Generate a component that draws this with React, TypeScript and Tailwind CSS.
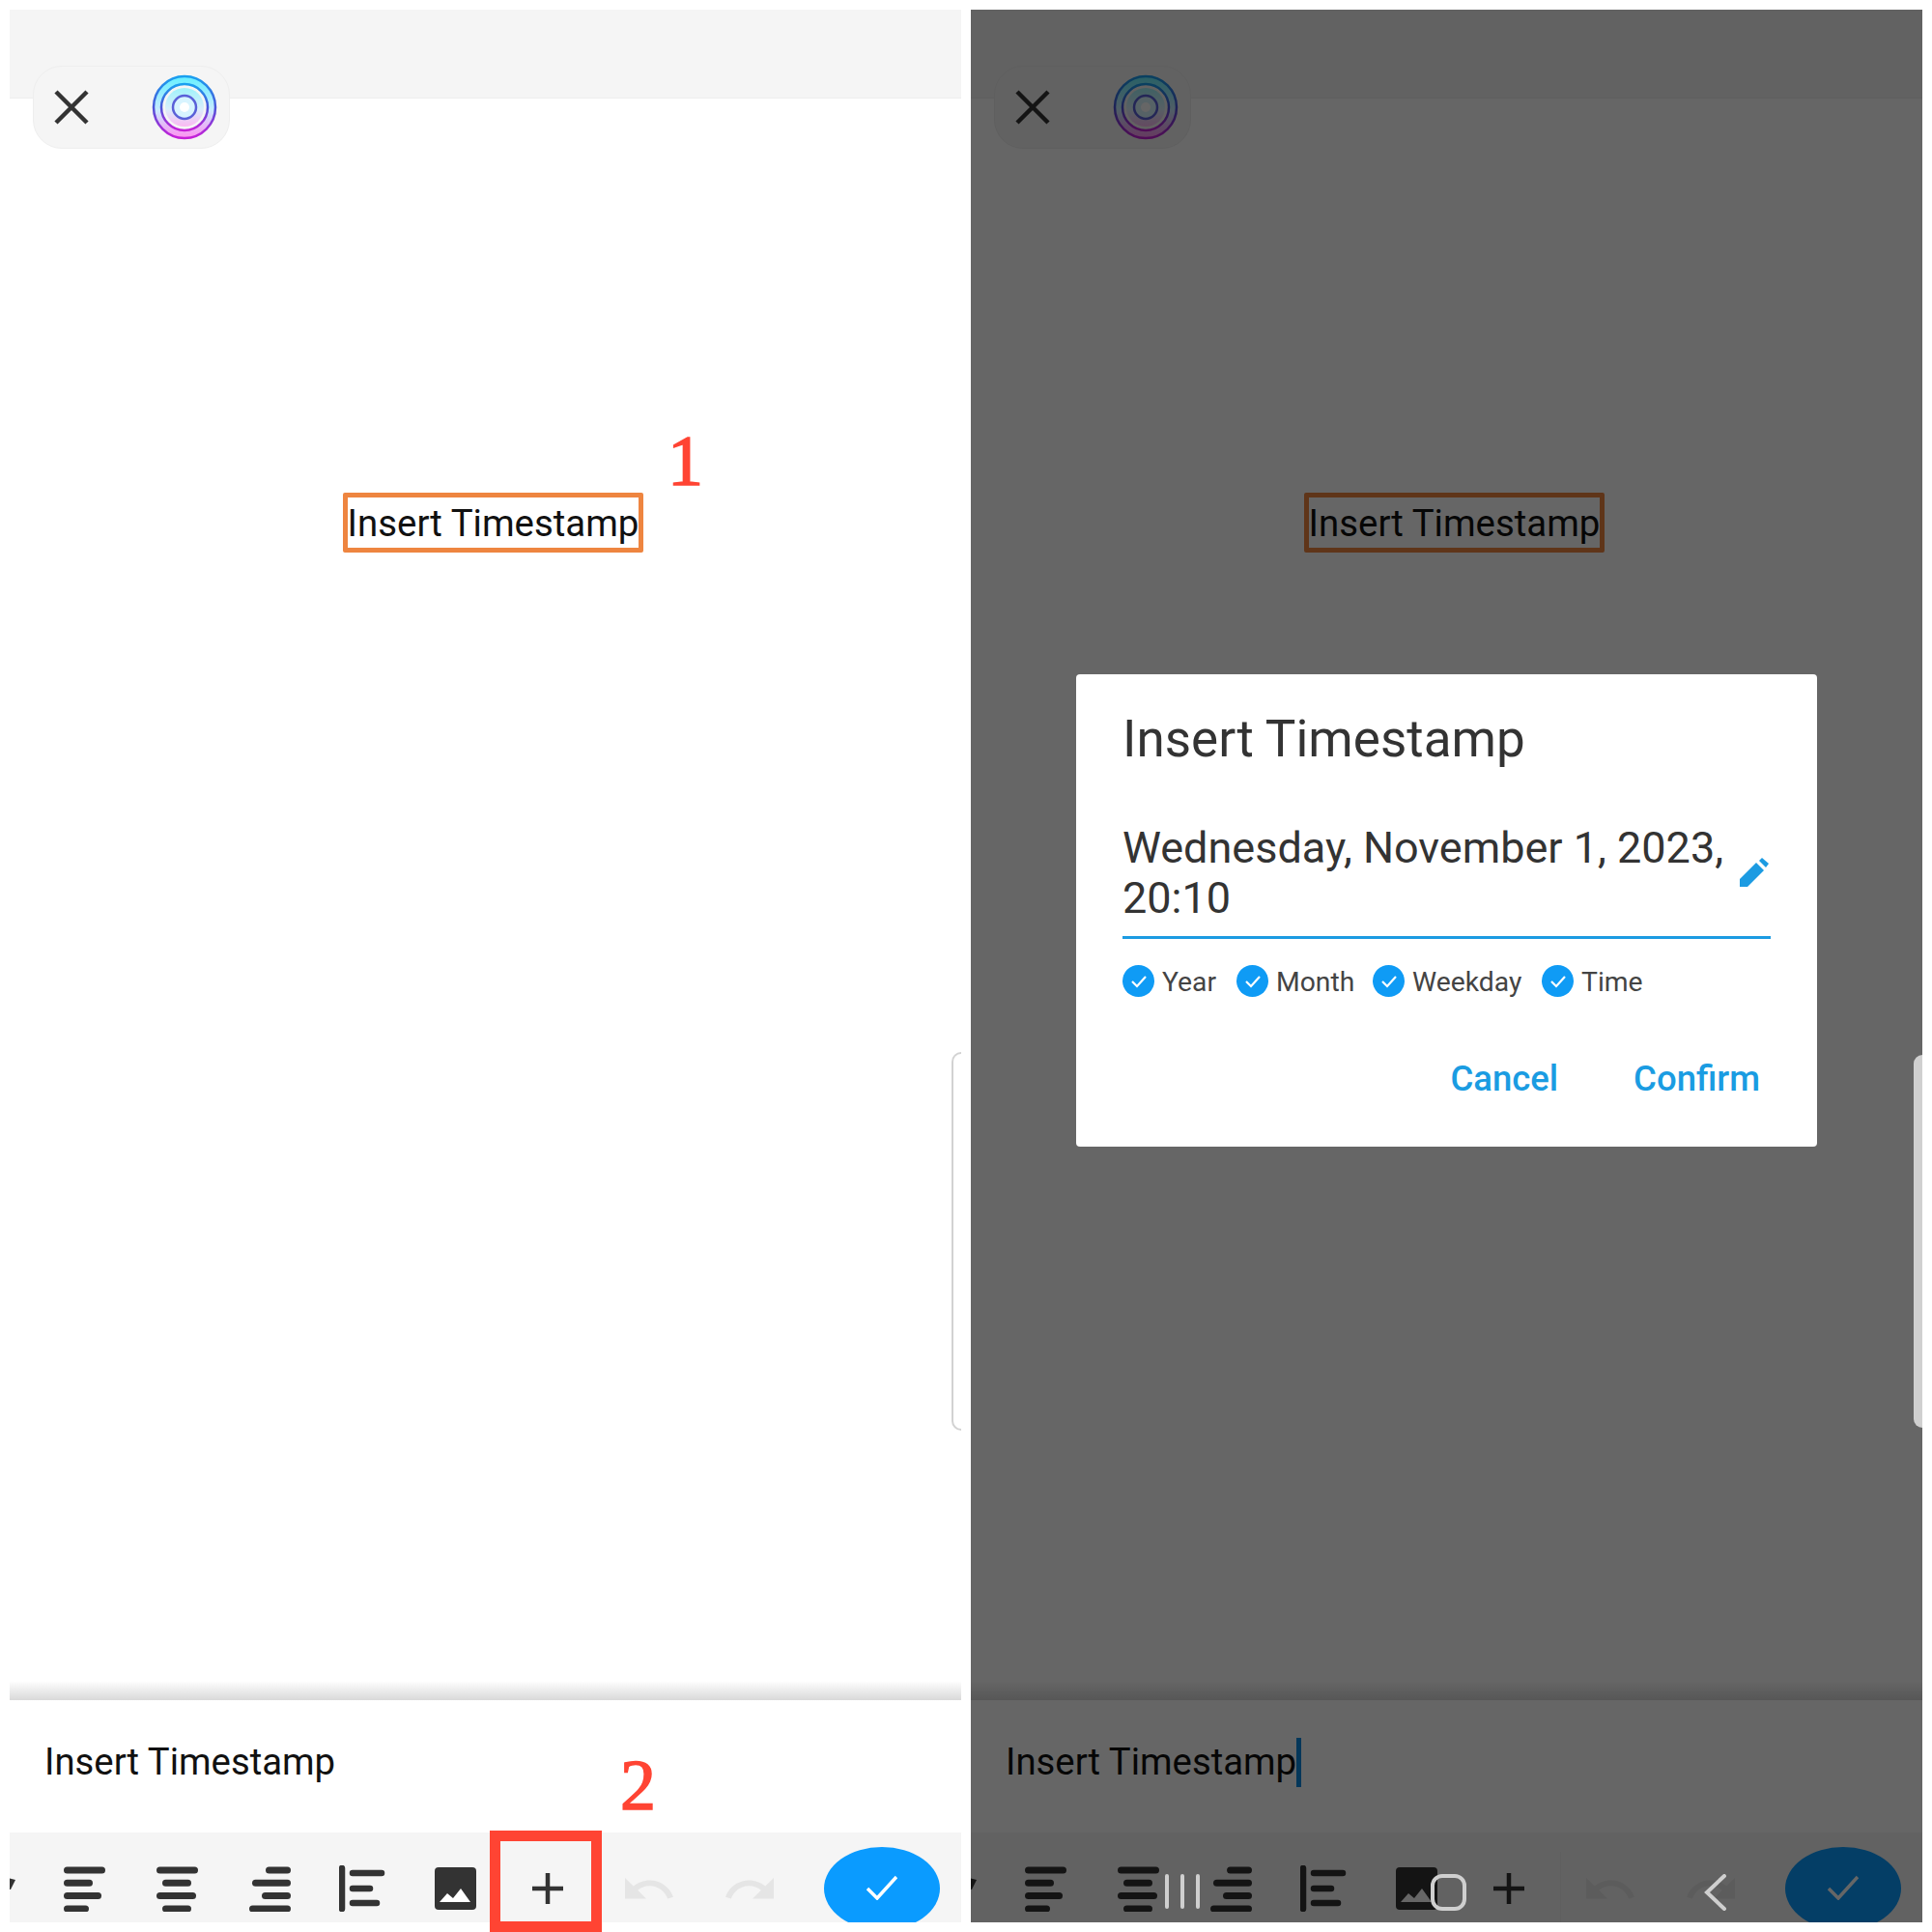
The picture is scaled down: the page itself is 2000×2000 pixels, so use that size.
import type { ReactNode } from "react";

function AlignIcon({ rows }: { rows: [number, number][] }) {
  return (
    <svg width="43" height="47" viewBox="0 0 43 47" fill="none" stroke="#333" strokeWidth="7" strokeLinecap="round">
      {rows.map(([from, to], i) => (
        <line key={i} x1={from + 3.5} x2={to - 3.5} y1={4 + i * 13.3} y2={4 + i * 13.3} />
      ))}
    </svg>
  );
}

function IndentIcon() {
  return (
    <svg width="48" height="48" viewBox="0 0 48 48" fill="none" stroke="#333" strokeLinecap="round">
      <line x1="3" x2="3" y1="3" y2="45" strokeWidth="6.5" />
      <line x1="14" x2="44" y1="8" y2="8" strokeWidth="6.5" />
      <line x1="14" x2="32" y1="24" y2="24" strokeWidth="6.5" />
      <line x1="14" x2="39" y1="39" y2="39" strokeWidth="6.5" />
    </svg>
  );
}

function ImageIcon() {
  return (
    <svg width="43" height="44" viewBox="0 0 43 44">
      <rect width="43" height="44" rx="4" fill="#333" />
      <path d="M5 36 L13 27 L19 32 L27 22 L37 36 Z" fill="#fff" />
    </svg>
  );
}

function UndoIcon() {
  return (
    <svg width="50" height="22" viewBox="2 7 20.5 9.2" preserveAspectRatio="none" fill="#e5e5e5">
      <path d="M12.5 8c-2.65 0-5.05.99-6.9 2.6L2 7v9h9l-3.62-3.62c1.39-1.16 3.16-1.88 5.12-1.88 3.54 0 6.55 2.31 7.6 5.5l2.37-.78C21.08 11.03 17.15 8 12.5 8z" />
    </svg>
  );
}

function RedoIcon() {
  return (
    <svg width="50" height="22" viewBox="1.5 7 20.5 9.2" preserveAspectRatio="none" fill="#e5e5e5">
      <path d="M18.4 10.6C16.55 8.99 14.15 8 11.5 8c-4.65 0-8.58 3.03-9.96 7.22L3.9 16c1.05-3.19 4.05-5.5 7.6-5.5 1.95 0 3.73.72 5.12 1.88L13 16h9V7l-3.6 3.6z" />
    </svg>
  );
}

function TargetLogo({ id }: { id: string }) {
  return (
    <svg width="68" height="68" viewBox="0 0 68 68" fill="none">
      <defs>
        <linearGradient id={`${id}-line`} x1="0" y1="0" x2="0" y2="1">
          <stop offset="0" stopColor="#1aa0f0" />
          <stop offset="0.5" stopColor="#4a55d8" />
          <stop offset="1" stopColor="#c81fd8" />
        </linearGradient>
        <linearGradient id={`${id}-fill`} x1="0" y1="0" x2="0" y2="1">
          <stop offset="0" stopColor="#66f0ff" />
          <stop offset="0.55" stopColor="#c8eaff" />
          <stop offset="1" stopColor="#ff90f0" />
        </linearGradient>
      </defs>
      <circle cx="34" cy="34" r="32" fill={`url(#${id}-fill)`} />
      <circle cx="34" cy="34" r="24" fill="#f5f5f5" />
      <circle cx="34" cy="34" r="20" fill={`url(#${id}-fill)`} opacity="0.6" />
      <circle cx="34" cy="34" r="12" fill="#d8f4ff" />
      <circle cx="34" cy="34" r="5" fill="#ffffff" />
      <circle cx="34" cy="34" r="32" stroke={`url(#${id}-line)`} strokeWidth="2.5" />
      <circle cx="34" cy="34" r="24" stroke={`url(#${id}-line)`} strokeWidth="2.5" />
      <circle cx="34" cy="34" r="12" stroke="#5a60d8" strokeWidth="2.5" />
    </svg>
  );
}

function Screen({ id, caret, children }: { id: string; caret?: boolean; children?: ReactNode }) {
  return (
    <div className="relative flex h-[1980px] w-[985px] flex-col overflow-hidden bg-white">
      <div className="h-[92px] border-b border-[#eeeeee] bg-[#f5f5f5]" />

      <div className="absolute left-[24px] top-[58px] flex h-[86px] w-[204px] items-center rounded-[30px] border border-[#eeeeee] bg-[#f5f5f5] pl-[21px]">
        <svg width="36" height="36" viewBox="0 0 36 36" fill="none" stroke="#333" strokeWidth="4.5">
          <path d="M2 2 L34 34 M34 2 L2 34" />
        </svg>
        <div className="ml-[65px]">
          <TargetLogo id={id} />
        </div>
      </div>

      <div className="flex-1 pl-[345px] pt-[408px]">
        <div className="flex h-[62px] w-[311px] items-center justify-center whitespace-nowrap rounded-[2px] border-[5px] border-[#ee8540] pt-[2px] text-[38.4px] leading-none text-[#111]">
          Insert Timestamp
        </div>
      </div>

      <div className="h-[20px] bg-gradient-to-b from-white to-[#d9d9d9]" />

      <div className="flex h-[137px] items-center pb-[8px] pl-[36px] text-[38.3px] leading-none text-[#111]">
        <span>Insert Timestamp</span>
        {caret ? <span className="h-[51px] w-[5px] bg-[#0a8ae0]" /> : null}
      </div>

      <div className="relative flex h-[93px] items-center bg-[#f5f5f5] pl-[29px] pt-[23px]">
        <svg className="absolute left-[-2px] top-[47px]" width="8" height="14" viewBox="0 0 8 14" fill="#333">
          <path d="M0 0 L8 2 L3 12 L0 12 Z" />
        </svg>
        <div className="flex w-[96px] justify-center">
          <AlignIcon rows={[[0, 43], [0, 30], [0, 39], [0, 26]]} />
        </div>
        <div className="flex w-[96px] justify-center">
          <AlignIcon rows={[[0, 43], [6, 36], [0, 41], [6, 36]]} />
        </div>
        <div className="flex w-[96px] justify-center">
          <AlignIcon rows={[[17, 43], [3, 43], [13, 43], [0, 43]]} />
        </div>
        <div className="flex w-[96px] justify-center">
          <IndentIcon />
        </div>
        <div className="flex w-[96px] justify-center">
          <ImageIcon />
        </div>
        <div className="flex w-[96px] justify-center">
          <svg width="32" height="32" viewBox="0 0 32 32" stroke="#333" strokeWidth="4.5">
            <path d="M0 16 H32 M16 0 V32" />
          </svg>
        </div>
        <div className="ml-[5px] flex w-[104px] justify-center">
          <UndoIcon />
        </div>
        <div className="flex w-[104px] justify-center">
          <RedoIcon />
        </div>
        <div className="absolute left-[843px] top-[15px] flex h-[86px] w-[120px] justify-center rounded-[50%] bg-[#0a9bff] pt-[29px]">
          <svg width="32" height="26" viewBox="0 0 32 26" fill="none" stroke="#fff" strokeWidth="3.5">
            <path d="M1 14 L11 24 L31 2" />
          </svg>
        </div>
      </div>

      {children}
    </div>
  );
}

function Option({ label, className }: { label: string; className: string }) {
  return (
    <div className={`flex items-center gap-[8px] ${className}`}>
      <svg className="mt-[-3px]" width="33" height="33" viewBox="0 0 33 33" fill="none">
        <circle cx="16.5" cy="16.5" r="16.5" fill="#0f9bf5" />
        <path d="M10 17 L15 22 L24 12" stroke="#fff" strokeWidth="2.2" />
      </svg>
      <span className="text-[28.3px] leading-none text-[#444]">{label}</span>
    </div>
  );
}

export default function App() {
  return (
    <div className="relative flex h-[2000px] w-[2000px] gap-[10px] bg-white p-[10px] font-['Roboto',sans-serif]">
      <Screen id="left">
        <div className="absolute right-0 top-[1079px] h-[392px] w-[10px] rounded-l-[12px] border-y-2 border-l-2 border-[#d2d2d2] bg-white" />
      </Screen>

      <Screen id="right" caret>
        <div className="absolute inset-0 bg-black/60" />

        <div className="absolute left-[109px] top-[688px] flex h-[489px] w-[767px] flex-col rounded-[4px] bg-white pl-[48px] pr-[48px] text-[#333]">
          <div className="mt-[37px] text-[53px] leading-[60px]">Insert Timestamp</div>
          <div className="mt-[53px] flex h-[124px] items-center justify-between border-b-[3px] border-[#1c9be2] pb-[9px]">
            <div className="whitespace-nowrap text-[45px] leading-[52px]">
              Wednesday, November 1, 2023,
              <br />
              20:10
            </div>
            <svg className="mr-[2px] mt-[-3px]" width="30" height="30" viewBox="0 0 30 30" fill="#1c9be2">
              <path d="M0 22 L17 5 L25 13 L8 30 L0 30 Z" />
              <path d="M20 3 L23 0 L30 6 L27 10 Z" />
            </svg>
          </div>
          <div className="mt-[30px] flex">
            <Option label="Year" className="w-[118px]" />
            <Option label="Month" className="w-[141px]" />
            <Option label="Weekday" className="w-[175px]" />
            <Option label="Time" className="w-[120px]" />
          </div>
          <div className="mt-[67px] flex justify-end gap-[78px] pr-[11px] text-[36.5px] font-medium leading-none text-[#1a9ce2]">
            <span>Cancel</span>
            <span>Confirm</span>
          </div>
        </div>

        <div className="absolute left-[610px] top-[1907px] h-[73px] w-px bg-[#5f5f5f]" />
        <div className="absolute left-[201px] top-[1930px] flex h-[36px] gap-[12px]">
          <span className="w-[4px] rounded-full bg-[#cfcfcf]" />
          <span className="w-[4px] rounded-full bg-[#cfcfcf]" />
          <span className="w-[4px] rounded-full bg-[#cfcfcf]" />
        </div>
        <div className="absolute left-[476px] top-[1930px] h-[38px] w-[37px] rounded-[12px] border-[4px] border-[#cfcfcf]" />
        <svg className="absolute left-[759px] top-[1930px]" width="24" height="38" viewBox="0 0 24 38" fill="none" stroke="#cfcfcf" strokeWidth="4" strokeLinecap="round">
          <path d="M21 2 L3 19 L21 36" />
        </svg>
        <div className="absolute right-0 top-[1082px] h-[386px] w-[9px] rounded-l-[12px] bg-[#d0d0d0]" />
      </Screen>

      <div className="absolute left-[507px] top-[1895px] h-[105px] w-[116px] border-[11px] border-[#ff4433]" />
      <div className="absolute left-[691px] top-[440px] font-['Liberation_Serif',serif] text-[74px] leading-[74px] text-[#ff4433] [-webkit-text-stroke:1.5px_#ff4433]">1</div>
      <div className="absolute left-[642px] top-[1811px] font-['Liberation_Serif',serif] text-[74px] leading-[74px] text-[#ff4433] [-webkit-text-stroke:1.5px_#ff4433]">2</div>
    </div>
  );
}
